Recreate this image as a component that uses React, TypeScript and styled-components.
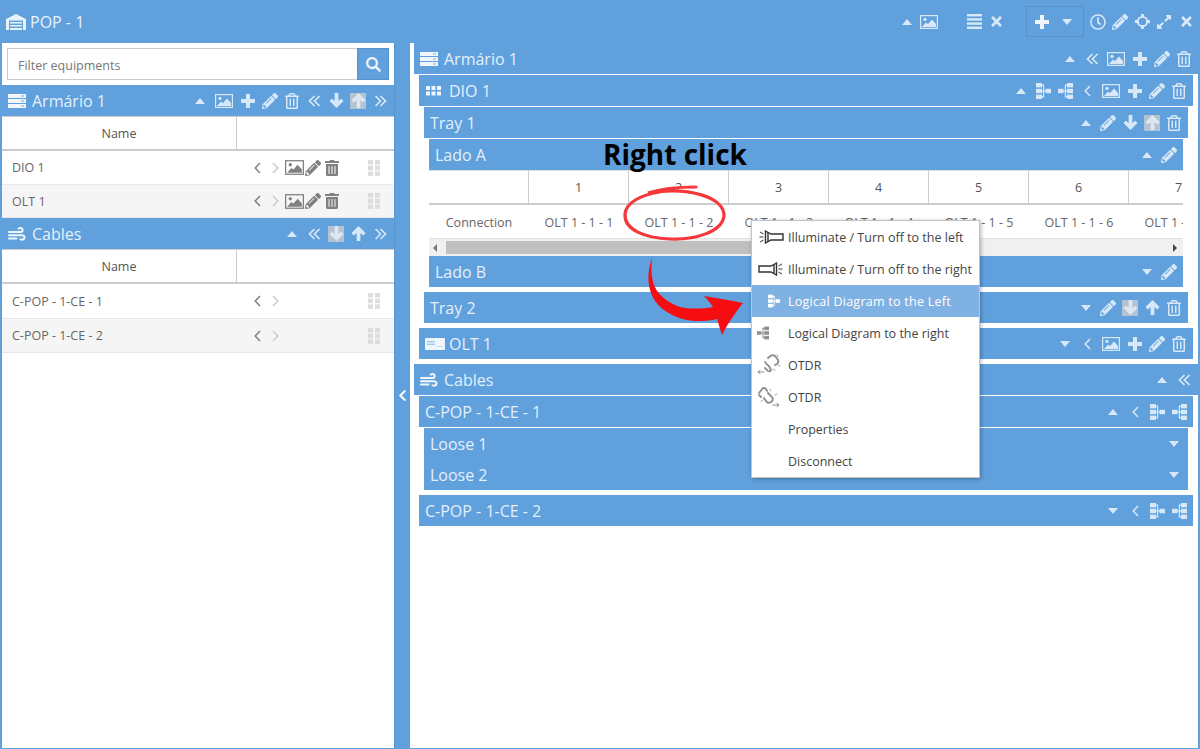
import React from 'react';
import styled, { createGlobalStyle } from 'styled-components';
import { FaChevronLeft, FaExpandAlt, FaPencilAlt, FaRegClock, FaRegTrashAlt, FaSearch, FaTimes, FaTrashAlt } from 'react-icons/fa';

const BLUE = '#5fa0dd';
const ICON = '#d8e8f7';

const Global = createGlobalStyle`
  html, body { margin: 0; padding: 0; background: ${BLUE}; }
  * { box-sizing: border-box; }
  body { font-family: "Open Sans", "Noto Sans", sans-serif; }
`;

const Shell = styled.div`
  position: relative; width: 1200px; height: 749px; background: ${BLUE};
  display: flex; flex-direction: column; overflow: hidden;
`;
const TopBar = styled.header`
  height: 43px; flex: none; display: flex; align-items: center; padding: 0 3px 0 6px; color: #e8f2fb;
`;
const TopTitle = styled.div`
  display: flex; align-items: center; gap: 4px; font-size: 16px; margin-right: auto;
`;
const Tools = styled.div<{ $ml?: number }>`
  display: flex; align-items: center; flex: none; margin-left: ${p => p.$ml ?? 0}px; color: ${ICON};
`;
const ToolBox = styled.div`
  display: flex; align-items: center; gap: 3px; width: 58px; height: 31px; margin-left: 19px; padding-left: 4px;
  border: 1px solid #5592cc; color: #eef5fb;
`;
const Main = styled.main`
  flex: 1; display: flex; padding: 0 2px 1px; min-height: 0;
`;
const LeftPane = styled.section`
  width: 392px; flex: none; background: #fff;
`;
const Splitter = styled.div`
  width: 16px; flex: none; display: flex; align-items: center; justify-content: center; color: #fff; font-size: 13px;
  border-left: 1px solid #5896d2;
`;
const RightPane = styled.section`
  flex: 1; background: #fff; min-width: 0;
`;
const FilterRow = styled.div`
  height: 42px; padding: 5px; display: flex;
`;
const FilterInput = styled.input`
  flex: 1; height: 32px; border: 1px solid #ccc; border-right: none; padding: 3px 10px 0; outline: none;
  font: 12.5px "Open Sans", sans-serif; color: #666;
  &::placeholder { color: #777; opacity: 1; }
`;
const SearchBtn = styled.button`
  width: 32px; height: 32px; border: 1px solid #5592cc; background: ${BLUE}; color: #e8f2fb; padding: 0;
  display: flex; align-items: center; justify-content: center; font-size: 15px;
`;
const Bar = styled.div<{ $pr?: number; $pl?: number; $mt?: number }>`
  height: 31px; display: flex; align-items: center; justify-content: space-between; background: ${BLUE};
  color: #e4f0fb; font-size: 16px; padding: 0 ${p => p.$pr ?? 3}px 0 ${p => p.$pl ?? 6}px;
  margin-top: ${p => p.$mt ?? 0}px; white-space: nowrap;
`;
const Title = styled.div<{ $gap?: number }>`
  display: flex; align-items: center; gap: ${p => p.$gap ?? 6}px;
`;
const Actions = styled.div`
  display: flex; align-items: center; color: ${ICON};
`;
const Slot = styled.span<{ $w?: number; $size?: number }>`
  width: ${p => p.$w ?? 22}px; height: 16px; flex: none; display: inline-flex; align-items: center; justify-content: center;
  font-size: ${p => p.$size ?? 15}px;
`;
const OffBox = styled.span`
  width: 16px; height: 16px; display: inline-flex; align-items: center; justify-content: center;
  background: #b3c3d2; color: #dfe7ee;
`;
const Caret = styled.i<{ $down?: boolean }>`
  display: block; width: 0; height: 0; border-left: 5px solid transparent; border-right: 5px solid transparent;
  ${p => (p.$down ? `border-top: 6px solid ${ICON};` : `border-bottom: 6px solid ${ICON};`)}
`;
const Nest = styled.div<{ $l?: number; $r?: number; $mt?: number }>`
  margin: ${p => p.$mt ?? 1}px ${p => p.$r ?? 5}px 0 ${p => p.$l ?? 5}px;
`;
const Root = styled.div<{ $mt?: number }>`
  margin: ${p => p.$mt ?? 0}px -2px 0 4px;
`;
const ListHead = styled.div`
  display: grid; grid-template-columns: 235px 1fr; height: 35px; border-top: 1px solid #ccc; border-bottom: 2px solid #ccc;
  background: #fff;
`;
const HeadCell = styled.div`
  display: flex; align-items: center; justify-content: center; font-size: 12.5px; color: #555;
  &:first-child { border-right: 1px solid #ccc; }
`;
const ListRow = styled.div<{ $alt?: boolean; $h?: number }>`
  display: grid; grid-template-columns: 236px 1fr; height: ${p => p.$h ?? 34}px; align-items: center; border-bottom: 1px solid #e8e8e8;
  background: ${p => (p.$alt ? '#f5f5f5' : '#fff')}; font-size: 12.5px; color: #666;
`;
const RowName = styled.div`
  padding-left: 10px;
`;
const RowActions = styled.div`
  display: flex; align-items: center; padding: 0 14px 0 10px;
`;
const RowIcon = styled.span<{ $light?: boolean; $w?: number }>`
  width: ${p => p.$w ?? 18}px; display: inline-flex; justify-content: center; align-items: center; font-size: 16px; flex: none;
  color: ${p => (p.$light ? '#ccc' : '#808080')};
`;
const GripSlot = styled.span`
  margin-left: auto; display: inline-flex; color: #ddd;
`;
const ScrollClip = styled.div`
  overflow: hidden;
`;
const PortTable = styled.table`
  width: 800px; table-layout: fixed; border-collapse: separate; border-spacing: 0; font-size: 12.5px; color: #666;
  th { height: 35px; font-weight: 400; border-top: 1px solid #ddd; border-bottom: 2px solid #ccc; border-right: 1px solid #ccc; color: #555; padding: 0; }
  td { height: 33px; text-align: center; padding: 1px 0 0; white-space: nowrap; overflow: hidden; }
`;
const Track = styled.div`
  height: 18px; background: #f0f0f0; border-top: 1px solid #e2e2e2; display: flex; align-items: center; padding: 0 4px;
  justify-content: space-between; position: relative;
`;
const Thumb = styled.div`
  position: absolute; left: 17px; top: 2px; height: 13px; width: 400px; background: #c0c0c0;
`;
const ArrowL = styled.i`
  border-top: 4px solid transparent; border-bottom: 4px solid transparent; border-right: 4px solid #777;
`;
const ArrowR = styled.i`
  border-top: 4px solid transparent; border-bottom: 4px solid transparent; border-left: 4px solid #444; margin-right: 2px;
`;
const Menu = styled.div`
  position: absolute; left: 751px; top: 220px; width: 229px; background: #fff; border: 1px solid #c4c4c4;
  box-shadow: 1px 1px 4px rgba(0,0,0,.3); z-index: 3;
`;
const MenuItem = styled.div<{ $active?: boolean }>`
  height: 32px; display: flex; align-items: center; font-size: 12.5px; white-space: nowrap;
  color: ${p => (p.$active ? '#fff' : '#444')}; background: ${p => (p.$active ? '#7fb1e3' : 'transparent')};
  letter-spacing: ${p => (p.$active ? '0.26px' : '0')};
`;
const MenuIcon = styled.span<{ $pl?: number }>`
  width: 36px; flex: none; display: flex; align-items: center; padding-left: ${p => p.$pl ?? 5}px;
`;
const Callout = styled.div`
  position: absolute; left: 603px; top: 135px; font-size: 28px; font-weight: 700; color: #000; line-height: 38px; z-index: 4; white-space: nowrap;
`;
const Scribble = styled.svg`
  position: absolute; left: 0; top: 0; z-index: 5; pointer-events: none;
`;

const ImageIcon = ({ w = 18, h = 14 }: { w?: number; h?: number }) => (
  <svg width={w} height={h} viewBox="0 0 18 14">
    <rect x="0.6" y="0.6" width="16.8" height="12.8" fill="none" stroke="currentColor" strokeWidth="1.2" />
    <circle cx="5" cy="4.4" r="1.6" fill="currentColor" />
    <path d="M2 12 L6 7.5 L8 9 L12 4.5 L16 9 V12 Z" fill="currentColor" />
  </svg>
);
const Tree = ({ flip, color, w = 15, h = 16 }: { flip?: boolean; color?: string; w?: number; h?: number }) => (
  <svg width={w} height={h} viewBox="0 0 15 16" fill={color ?? 'currentColor'} style={flip ? { transform: 'scaleX(-1)' } : undefined}>
    <rect x="0" y="0" width="6" height="4.4" /><rect x="0" y="5.8" width="6" height="4.4" /><rect x="0" y="11.6" width="6" height="4.4" />
    <rect x="6" y="1.6" width="2" height="1.2" /><rect x="6" y="13.2" width="2" height="1.2" />
    <rect x="7" y="1.6" width="1.2" height="12.8" /><rect x="6" y="7.4" width="4" height="1.2" />
    <rect x="9.5" y="5.8" width="5.5" height="4.4" />
  </svg>
);
const Grip = () => (
  <svg width="12" height="16" viewBox="0 0 12 16" fill="currentColor">
    <rect x="0" y="0" width="5" height="4.5" /><rect x="7" y="0" width="5" height="4.5" />
    <rect x="0" y="5.7" width="5" height="4.5" /><rect x="7" y="5.7" width="5" height="4.5" />
    <rect x="0" y="11.4" width="5" height="4.5" /><rect x="7" y="11.4" width="5" height="4.5" />
  </svg>
);
const Garage = () => (
  <svg width="20" height="16" viewBox="0 0 20 16">
    <path d="M0 16 V5 L10 0 L20 5 V16 H17 V6.5 H3 V16 Z" fill="#e8f2fb" />
    <path d="M4 8 H16 V9.6 H4 Z M4 11 H16 V12.6 H4 Z M4 14 H16 V16 H4 Z" fill="#e8f2fb" />
  </svg>
);
const Rack = ({ w = 18 }: { w?: number }) => (
  <svg width={w} height="14" viewBox="0 0 18 14" fill="#f0f6fc">
    <rect y="0" width="18" height="4" /><rect y="5" width="18" height="4" /><rect y="10" width="18" height="4" />
    <rect x="13" y="1.4" width="3" height="1.2" fill="#8dbbe6" /><rect x="13" y="6.4" width="3" height="1.2" fill="#8dbbe6" /><rect x="13" y="11.4" width="3" height="1.2" fill="#8dbbe6" />
  </svg>
);
const Dots = () => (
  <svg width="15" height="10" viewBox="0 0 15 10" fill="#f0f6fc">
    <rect x="0" y="0" width="4" height="4" /><rect x="5.5" y="0" width="4" height="4" /><rect x="11" y="0" width="4" height="4" />
    <rect x="0" y="5.5" width="4" height="4" /><rect x="5.5" y="5.5" width="4" height="4" /><rect x="11" y="5.5" width="4" height="4" />
  </svg>
);
const Wind = () => (
  <svg width="18" height="14" viewBox="0 0 18 14" fill="none" stroke="#f0f6fc" strokeWidth="2" strokeLinecap="round">
    <path d="M1 5 H8 M1 8.2 H14 Q17 8.5 16.5 11 Q15.5 13.4 12.5 12.4 M1 11.4 H8.5 M5 5 H12 Q15 5 14.6 2.6 Q13.6 0 10.6 1.6" />
  </svg>
);
const Card = () => (
  <svg width="20" height="12" viewBox="0 0 20 12">
    <rect width="20" height="12" rx="1" fill="#eef5fb" />
    <rect x="2" y="3" width="8" height="1.3" fill="#9cc4ea" /><rect x="2" y="5.6" width="8" height="1.3" fill="#9cc4ea" />
    <rect x="12" y="8" width="6" height="1" fill="#c5dbf0" />
  </svg>
);
const Crosshair = () => (
  <svg width="15" height="15" viewBox="0 0 16 16" fill="none" stroke="currentColor" strokeWidth="2">
    <circle cx="8" cy="8" r="5" />
    <path d="M8 0 V4 M8 12 V16 M0 8 H4 M12 8 H16" strokeWidth="3" />
  </svg>
);
const PlusGlyph = () => (
  <svg width="14" height="14" viewBox="0 0 14 14" fill="currentColor">
    <path d="M5 0 H9 V5 H14 V9 H9 V14 H5 V9 H0 V5 H5 Z" />
  </svg>
);
const ArrowGlyph = ({ up }: { up?: boolean }) => (
  <svg width="15" height="15" viewBox="0 0 16 16" fill="currentColor" style={up ? { transform: 'rotate(180deg)' } : undefined}>
    <path d="M8 16 L0.5 8.5 L3 6 L6 8.5 V0 H10 V8.5 L13 6 L15.5 8.5 Z" />
  </svg>
);
const Chevrons = ({ right }: { right?: boolean }) => (
  <svg width="13" height="12" viewBox="0 0 13 12" fill="none" stroke="currentColor" strokeWidth="1.7" style={right ? { transform: 'scaleX(-1)' } : undefined}>
    <path d="M6.5 1 L1.5 6 L6.5 11 M11.5 1 L6.5 6 L11.5 11" />
  </svg>
);
const Angle = ({ right }: { right?: boolean }) => (
  <svg width="7" height="12" viewBox="0 0 7 12" fill="none" stroke="currentColor" strokeWidth="1.5" style={right ? { transform: 'scaleX(-1)' } : undefined}>
    <path d="M6 1 L1.2 6 L6 11" />
  </svg>
);
const BarsGlyph = () => (
  <svg width="15" height="15" viewBox="0 0 15 15" fill="currentColor">
    <rect y="0" width="15" height="2.4" /><rect y="4.2" width="15" height="2.4" /><rect y="8.4" width="15" height="2.4" /><rect y="12.6" width="15" height="2.4" />
  </svg>
);
const Flash = ({ flip }: { flip?: boolean }) => (
  <svg width="25" height="14" viewBox="0 0 25 14" fill="none" stroke="#333" strokeWidth="1.4" style={flip ? { transform: 'scaleX(-1)' } : undefined}>
    <path d="M6.5 1 L12 4 H24 V10 H12 L6.5 13 Z" />
    <path d="M9 2.5 V11.5" />
    <path d="M0.5 7 H4.5 M1 2 L4.5 4 M1 12 L4.5 10" strokeWidth="1" />
  </svg>
);
const Otdr = ({ down }: { down?: boolean }) => (
  <svg width="24" height="22" viewBox="0 0 24 22" fill="none" stroke="#8f8f8f" strokeWidth="1.9" strokeLinecap="round">
    {down ? (
      <>
        <path d="M3 7 L6 3 Q8 1 10 3 L11 5" /><path d="M5 11 L3 9" />
        <path d="M12 7 L16 11 Q18 14 15 16 Q12 18 10 15 L8 12" />
        <path d="M17 19 H23 M21 17.4 L23 19 L21 20.6" strokeWidth="1" />
        <path d="M14 3 L15 5 M19 9 L21 8 M5 15 L7 14" strokeWidth="0.8" />
      </>
    ) : (
      <>
        <path d="M11 4 L14 1.6 Q16 0.6 18 2 L21 6 Q22 8 20 10 L18 11" />
        <path d="M8 8 Q10 11 12 12 L14 16 Q13 18 11 17 L8 14" />
        <path d="M1 18 H7 M3 16.4 L1 18 L3 19.6" strokeWidth="1" />
        <path d="M20 1 L21 3 M23 12 L21 11 M16 15 L18 16" strokeWidth="0.8" />
      </>
    )}
  </svg>
);

const Up = () => <Slot><Caret /></Slot>;
const Down = () => <Slot><Caret $down /></Slot>;
const Img = () => <Slot $w={26}><ImageIcon /></Slot>;
const Plus = () => <Slot><PlusGlyph /></Slot>;
const Pen = () => <Slot $size={16}><FaPencilAlt /></Slot>;
const Trash = () => <Slot $size={16}><FaRegTrashAlt /></Slot>;
const DblL = () => <Slot><Chevrons /></Slot>;
const DblR = () => <Slot><Chevrons right /></Slot>;
const ArrD = () => <Slot><ArrowGlyph /></Slot>;
const ArrU = () => <Slot><ArrowGlyph up /></Slot>;
const OffD = () => <Slot><OffBox><ArrowGlyph /></OffBox></Slot>;
const OffU = () => <Slot><OffBox><ArrowGlyph up /></OffBox></Slot>;
const Lt = () => <Slot><Angle /></Slot>;
const TreeL = () => <Slot><Tree /></Slot>;
const TreeR = () => <Slot><Tree flip /></Slot>;

const EquipRow = ({ name, alt, h }: { name: string; alt?: boolean; h?: number }) => (
  <ListRow $alt={alt} $h={h}>
    <RowName>{name}</RowName>
    <RowActions>
      <RowIcon><Angle /></RowIcon>
      <RowIcon $light><Angle right /></RowIcon>
      <RowIcon $w={20}><ImageIcon w={19} h={15} /></RowIcon>
      <RowIcon><FaPencilAlt /></RowIcon>
      <RowIcon $w={20}><FaTrashAlt /></RowIcon>
      <GripSlot><Grip /></GripSlot>
    </RowActions>
  </ListRow>
);
const CableRow = ({ name, alt, h }: { name: string; alt?: boolean; h?: number }) => (
  <ListRow $alt={alt} $h={h}>
    <RowName>{name}</RowName>
    <RowActions>
      <RowIcon><Angle /></RowIcon>
      <RowIcon $light><Angle right /></RowIcon>
      <GripSlot><Grip /></GripSlot>
    </RowActions>
  </ListRow>
);

const ports = [1, 2, 3, 4, 5, 6, 7];

export default function App() {
  return (
    <Shell>
      <Global />
      <TopBar>
        <TopTitle><Garage />POP - 1</TopTitle>
        <Tools>
          <Slot><Caret /></Slot>
          <Slot><ImageIcon /></Slot>
        </Tools>
        <Tools $ml={23}>
          <Slot><BarsGlyph /></Slot>
          <Slot><FaTimes /></Slot>
        </Tools>
        <ToolBox>
          <Slot><PlusGlyph /></Slot>
          <Slot><Caret $down /></Slot>
        </ToolBox>
        <Tools $ml={3}>
          <Slot $size={16}><FaRegClock /></Slot>
          <Slot $size={16}><FaPencilAlt /></Slot>
          <Slot><Crosshair /></Slot>
          <Slot $size={16}><FaExpandAlt /></Slot>
          <Slot><FaTimes /></Slot>
        </Tools>
      </TopBar>

      <Main>
        <LeftPane>
          <FilterRow>
            <FilterInput placeholder="Filter equipments" readOnly />
            <SearchBtn aria-label="Search"><FaSearch /></SearchBtn>
          </FilterRow>
          <Bar $pl={6}>
            <Title $gap={6}><Rack />Armário 1</Title>
            <Actions><Up /><Img /><Plus /><Pen /><Trash /><DblL /><ArrD /><OffU /><DblR /></Actions>
          </Bar>
          <ListHead><HeadCell>Name</HeadCell><HeadCell /></ListHead>
          <EquipRow name="DIO 1" />
          <EquipRow name="OLT 1" alt h={33} />
          <Bar $pl={6}>
            <Title $gap={6}><Wind />Cables</Title>
            <Actions><Up /><DblL /><OffD /><ArrU /><DblR /></Actions>
          </Bar>
          <ListHead><HeadCell>Name</HeadCell><HeadCell /></ListHead>
          <CableRow name="C-POP - 1-CE - 1" h={35} />
          <CableRow name="C-POP - 1-CE - 2" alt />
        </LeftPane>

        <Splitter><FaChevronLeft /></Splitter>

        <RightPane>
          <Root>
            <Bar $pr={5}>
              <Title $gap={6}><Rack />Armário 1</Title>
              <Actions><Up /><DblL /><Img /><Plus /><Pen /><Trash /></Actions>
            </Bar>
            <Nest $r={7}>
              <Bar $pl={7}>
                <Title $gap={8}><Dots />DIO 1</Title>
                <Actions><Up /><TreeL /><TreeR /><Lt /><Img /><Plus /><Pen /><Trash /></Actions>
              </Bar>
              <Nest>
                <Bar>
                  <Title>Tray 1</Title>
                  <Actions><Up /><Pen /><ArrD /><OffU /><Trash /></Actions>
                </Bar>
                <Nest>
                  <Bar>
                    <Title>Lado A</Title>
                    <Actions><Up /><Pen /></Actions>
                  </Bar>
                  <ScrollClip>
                    <PortTable>
                      <colgroup>
                        {[0, ...ports].map(c => <col key={c} width="100" />)}
                      </colgroup>
                      <thead>
                        <tr>
                          <th />
                          {ports.map(n => <th key={n}>{n}</th>)}
                        </tr>
                      </thead>
                      <tbody>
                        <tr>
                          <td>Connection</td>
                          {ports.map(n => <td key={n}>{`OLT 1 - 1 - ${n}`}</td>)}
                        </tr>
                      </tbody>
                    </PortTable>
                  </ScrollClip>
                  <Track><ArrowL /><Thumb /><ArrowR /></Track>
                  <Bar>
                    <Title>Lado B</Title>
                    <Actions><Down /><Pen /></Actions>
                  </Bar>
                </Nest>
                <Bar $mt={5}>
                  <Title>Tray 2</Title>
                  <Actions><Down /><Pen /><OffD /><ArrU /><Trash /></Actions>
                </Bar>
              </Nest>
              <Bar $mt={5} $pl={6}>
                <Title $gap={4}><Card />OLT 1</Title>
                <Actions><Down /><Lt /><Img /><Plus /><Pen /><Trash /></Actions>
              </Bar>
            </Nest>
          </Root>
          <Root $mt={5}>
            <Bar $pr={5}>
              <Title $gap={6}><Wind />Cables</Title>
              <Actions><Up /><DblL /></Actions>
            </Bar>
            <Nest $r={7}>
              <Bar>
                <Title>C-POP - 1-CE - 1</Title>
                <Actions><Up /><Lt /><TreeL /><TreeR /></Actions>
              </Bar>
              <Nest>
                <Bar>
                  <Title>Loose 1</Title>
                  <Actions><Down /></Actions>
                </Bar>
                <Bar>
                  <Title>Loose 2</Title>
                  <Actions><Down /></Actions>
                </Bar>
              </Nest>
              <Bar $mt={5}>
                <Title>C-POP - 1-CE - 2</Title>
                <Actions><Down /><Lt /><TreeL /><TreeR /></Actions>
              </Bar>
            </Nest>
          </Root>
        </RightPane>
      </Main>

      <Menu>
        <MenuItem><MenuIcon $pl={7}><Flash /></MenuIcon>Illuminate / Turn off to the left</MenuItem>
        <MenuItem><MenuIcon $pl={6}><Flash flip /></MenuIcon>Illuminate / Turn off to the right</MenuItem>
        <MenuItem $active><MenuIcon $pl={16}><Tree color="#fff" w={12} h={14} /></MenuIcon>Logical Diagram to the Left</MenuItem>
        <MenuItem><MenuIcon $pl={5}><Tree flip color="#8f8f8f" w={12} h={14} /></MenuIcon>Logical Diagram to the right</MenuItem>
        <MenuItem><MenuIcon $pl={5}><Otdr /></MenuIcon>OTDR</MenuItem>
        <MenuItem><MenuIcon $pl={4}><Otdr down /></MenuIcon>OTDR</MenuItem>
        <MenuItem><MenuIcon />Properties</MenuItem>
        <MenuItem><MenuIcon />Disconnect</MenuItem>
      </Menu>

      <Callout>Right click</Callout>
      <Scribble width="1200" height="749" viewBox="0 0 1200 749">
        <path d="M696 187 C680 187 660 189 648 193 C690 186 725 198 724 216 C722 232 695 240 670 239 C645 238 624 230 625 214 C626 203 640 195 660 192" fill="none" stroke="#f5383b" strokeWidth="3.2" strokeLinecap="round" />
        <path d="M652 258 C645 278 648 298 664 310 C680 322 700 323 717 319 L722 335 C727 325 735 313 743 303 C730 300 716 298 704 296 C708 300 711 304 713 307 C700 309 690 309 680 307 C668 303 656 294 653 282 C651 274 651 266 652 258 Z" fill="#f60d12" />
      </Scribble>
    </Shell>
  );
}
